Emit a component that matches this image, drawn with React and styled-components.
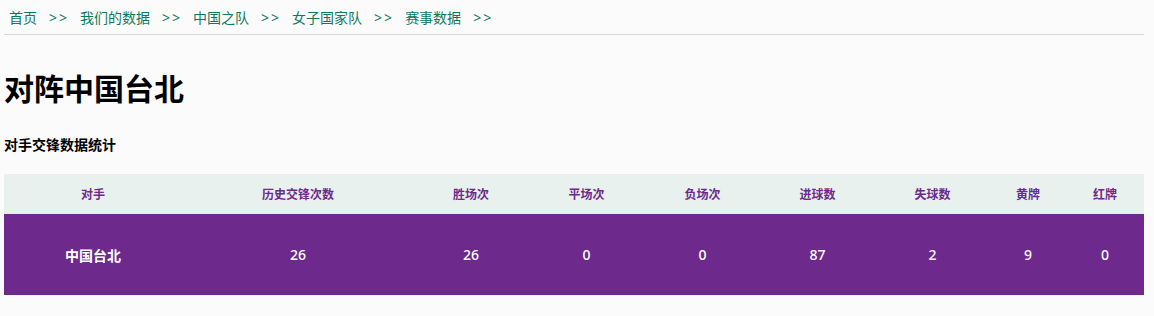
import React from 'react';
import styled, { createGlobalStyle } from 'styled-components';

const GlobalStyle = createGlobalStyle`
  html, body {
    margin: 0;
    padding: 0;
    background: #fbfbfb;
    font-family: "Noto Sans", "Noto Sans CJK SC", sans-serif;
  }
`;

const Page = styled.div`
  padding: 0 10px 0 4px;
`;

const Breadcrumb = styled.nav`
  display: flex;
  align-items: center;
  height: 34px;
  padding-left: 5px;
  border-bottom: 1px solid #d8d8d8;
  font-size: 14px;
  color: #0b7a5c;
`;

const Crumb = styled.a`
  color: inherit;
  text-decoration: none;
`;

const Sep = styled.span`
  padding: 0 11px 0 12px;
  letter-spacing: 2px;
`;

const Title = styled.h1`
  margin: 36px 0 0;
  font-size: 30px;
  line-height: 36px;
  font-weight: 700;
  color: #000;
`;

const SubTitle = styled.h3`
  margin: 28px 0 0;
  font-size: 14px;
  line-height: 20px;
  font-weight: 700;
  color: #000;
`;

const Table = styled.table`
  width: 1140px;
  margin-top: 19px;
  border-collapse: collapse;
  table-layout: fixed;
`;

const Th = styled.th`
  height: 39px;
  padding: 0;
  background: #e8f1ee;
  border-bottom: 1px solid #def0e4;
  color: #6e2a8a;
  font-size: 12px;
  font-weight: 700;
  text-align: center;
`;

const Td = styled.td`
  height: 81px;
  padding: 0;
  background: #6d2a8c;
  color: #fff;
  font-size: 14px;
  font-weight: ${p => (p.$strong ? 700 : 500)};
  text-align: center;
`;

const crumbs = ['首页', '我们的数据', '中国之队', '女子国家队', '赛事数据'];

const columns = [
  { label: '对手', width: 178 },
  { label: '历史交锋次数', width: 232 },
  { label: '胜场次', width: 114 },
  { label: '平场次', width: 117 },
  { label: '负场次', width: 115 },
  { label: '进球数', width: 115 },
  { label: '失球数', width: 115 },
  { label: '黄牌', width: 76 },
  { label: '红牌', width: 78 },
];

const row = ['中国台北', '26', '26', '0', '0', '87', '2', '9', '0'];

export default function App() {
  return (
    <>
      <GlobalStyle />
      <Page>
        <Breadcrumb>
          {crumbs.map(c => (
            <React.Fragment key={c}>
              <Crumb href="#">{c}</Crumb>
              <Sep>&gt;&gt;</Sep>
            </React.Fragment>
          ))}
        </Breadcrumb>
        <Title>对阵中国台北</Title>
        <SubTitle>对手交锋数据统计</SubTitle>
        <Table>
          <colgroup>
            {columns.map(c => (
              <col key={c.label} style={{ width: c.width }} />
            ))}
          </colgroup>
          <thead>
            <tr>
              {columns.map(c => (
                <Th key={c.label}>{c.label}</Th>
              ))}
            </tr>
          </thead>
          <tbody>
            <tr>
              {row.map((v, i) => (
                <Td key={i} $strong={i === 0}>{v}</Td>
              ))}
            </tr>
          </tbody>
        </Table>
      </Page>
    </>
  );
}
